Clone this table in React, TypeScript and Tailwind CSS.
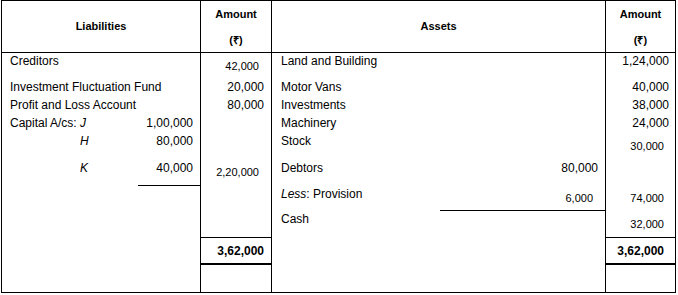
import React from "react";

const FONT = "font-['Liberation_Sans',Arial,sans-serif]";

export default function App() {
  return (
    <div className={`bg-white w-[678px] h-[295px] text-black ${FONT}`}>
      <div className="ml-[1px] w-[675px] border border-black">
        {/* Header */}
        <div className="grid grid-cols-[199px_71px_334px_69px] h-[52px] border-b border-black text-[11px] font-bold">
          <div className="border-r border-black flex items-center justify-center">Liabilities</div>
          <div className="border-r border-black flex flex-col items-center pt-[4px] gap-[8px]">
            <div className="leading-[18px] h-[18px]">Amount</div>
            <div className="leading-[18px] h-[18px]">(₹)</div>
          </div>
          <div className="border-r border-black flex items-center justify-center">Assets</div>
          <div className="flex flex-col items-center pt-[4px] gap-[8px]">
            <div className="leading-[18px] h-[18px]">Amount</div>
            <div className="leading-[18px] h-[18px]">(₹)</div>
          </div>
        </div>

        {/* Body */}
        <div className="grid grid-cols-[199px_71px_334px_69px] h-[184px] text-[12px]">
          {/* Liabilities */}
          <div className="border-r border-black flex flex-col">
            <div className="pl-[8px] leading-[16px] h-[16px]">Creditors</div>
            <div className="pl-[8px] leading-[18px] h-[18px] mt-[9px]">Investment Fluctuation Fund</div>
            <div className="pl-[8px] leading-[18px] h-[18px]">Profit and Loss Account</div>
            <div className="flex leading-[18px] h-[18px]">
              <div className="flex-1 pl-[8px]">
                Capital A/cs: <span className="italic">J</span>
              </div>
              <div className="w-[62px] text-right pr-[7px]">1,00,000</div>
            </div>
            <div className="flex leading-[18px] h-[18px]">
              <div className="flex-1 pl-[78px] italic">H</div>
              <div className="w-[62px] text-right pr-[7px]">80,000</div>
            </div>
            <div className="flex items-start mt-[9px]">
              <div className="flex-1 pl-[78px] italic leading-[18px] h-[18px]">K</div>
              <div className="w-[62px] h-[27px] border-b border-black text-right pr-[7px] leading-[18px]">40,000</div>
            </div>
          </div>

          {/* Liabilities amount */}
          <div className="border-r border-black flex flex-col text-right">
            <div className="mt-[6px] text-[11px] leading-[14px] h-[14px] pr-[12px]">42,000</div>
            <div className="mt-[5px] leading-[18px] h-[18px] pr-[7px]">20,000</div>
            <div className="leading-[18px] h-[18px] pr-[7px]">80,000</div>
            <div className="mt-[51px] text-[11px] leading-[14px] h-[14px] pr-[12px]">2,20,000</div>
          </div>

          {/* Assets */}
          <div className="border-r border-black flex flex-col">
            <div className="pl-[9px] leading-[16px] h-[16px]">Land and Building</div>
            <div className="pl-[9px] leading-[18px] h-[18px] mt-[9px]">Motor Vans</div>
            <div className="pl-[9px] leading-[18px] h-[18px]">Investments</div>
            <div className="pl-[9px] leading-[18px] h-[18px]">Machinery</div>
            <div className="pl-[9px] leading-[18px] h-[18px]">Stock</div>
            <div className="flex items-start mt-[9px]">
              <div className="flex-1 pl-[9px] flex flex-col">
                <div className="leading-[18px] h-[18px]">Debtors</div>
                <div className="leading-[18px] h-[18px] mt-[8px]">
                  <span className="italic">Less</span>: Provision
                </div>
              </div>
              <div className="w-[165px] flex flex-col text-right border-b border-black pb-[5px]">
                <div className="leading-[18px] h-[18px] pr-[7px]">80,000</div>
                <div className="mt-[14px] text-[11px] leading-[14px] h-[14px] pr-[12px]">6,000</div>
              </div>
            </div>
            <div className="pl-[9px] leading-[16px] h-[16px]">Cash</div>
          </div>

          {/* Assets amount */}
          <div className="flex flex-col text-right">
            <div className="leading-[16px] h-[16px] pr-[6px]">1,24,000</div>
            <div className="mt-[9px] leading-[18px] h-[18px] pr-[6px]">40,000</div>
            <div className="leading-[18px] h-[18px] pr-[6px]">38,000</div>
            <div className="leading-[18px] h-[18px] pr-[6px]">24,000</div>
            <div className="mt-[7px] text-[11px] leading-[14px] h-[14px] pr-[11px]">30,000</div>
            <div className="mt-[38px] text-[11px] leading-[14px] h-[14px] pr-[11px]">74,000</div>
            <div className="mt-[12px] text-[11px] leading-[14px] h-[14px] pr-[11px]">32,000</div>
          </div>
        </div>

        {/* Totals */}
        <div className="grid grid-cols-[199px_71px_334px_69px] text-[12px] font-bold">
          <div className="border-r border-black" />
          <div className="border-r border-black border-t border-b-2 h-[28px] flex items-center justify-end pr-[7px]">
            3,62,000
          </div>
          <div className="border-r border-black" />
          <div className="border-t border-b-2 border-black h-[28px] flex items-center justify-end pr-[11px]">
            3,62,000
          </div>
        </div>

        {/* Final empty row */}
        <div className="grid grid-cols-[199px_71px_334px_69px] h-[27px]">
          <div className="border-r border-black" />
          <div className="border-r border-black" />
          <div className="border-r border-black" />
          <div />
        </div>
      </div>
    </div>
  );
}
